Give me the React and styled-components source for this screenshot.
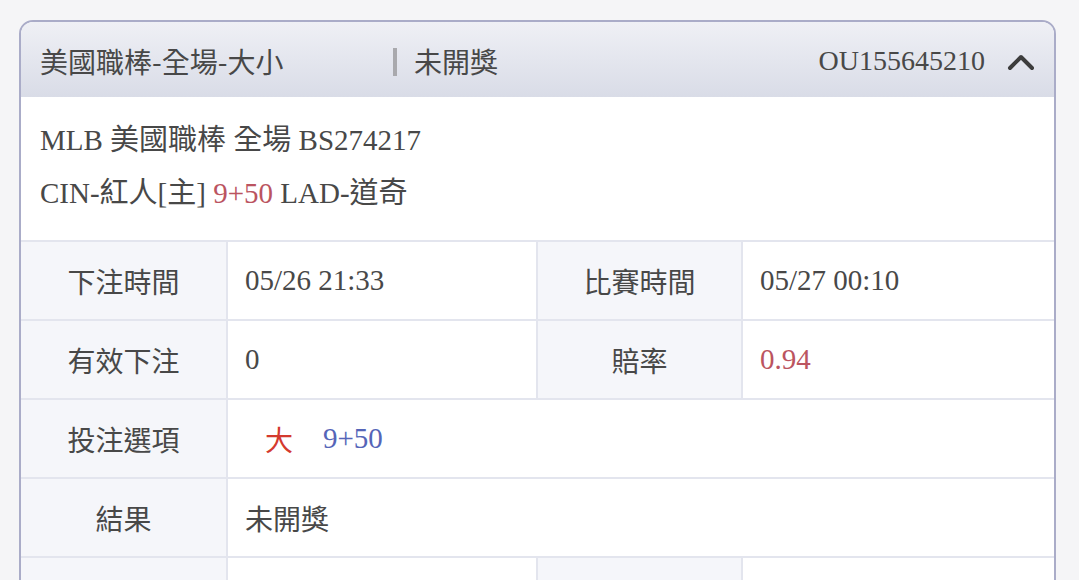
import React from 'react';
import styled, { createGlobalStyle } from 'styled-components';

const GlobalStyle = createGlobalStyle`
  html, body {
    margin: 0;
    padding: 0;
    background: #f5f5f7;
  }
  body {
    font-family: "Liberation Serif", "Noto Sans CJK TC", serif;
    color: #484848;
    overflow: hidden;
  }
`;

const Page = styled.div`
  padding: 20px 23px 0 19px;
  height: 580px;
  box-sizing: border-box;
`;

const Card = styled.div`
  border: 2px solid #aaacc8;
  border-radius: 14px;
  overflow: hidden;
  background: #fff;
  height: 600px;
`;

const Header = styled.div`
  height: 75px;
  display: flex;
  align-items: center;
  padding: 2px 19px 0 19px;
  box-sizing: border-box;
  background: linear-gradient(to bottom, #eff0f5 0%, #d9dce7 100%);
  color: #484848;
`;

const Title = styled.span`
  width: 353px;
  font-family: "Noto Sans CJK TC", sans-serif;
  font-size: 28px;
`;

const Divider = styled.span`
  width: 4px;
  height: 28px;
  background: #a9a9ad;
  margin-right: 17px;
  margin-top: 2px;
`;

const Status = styled.span`
  flex: 1;
  font-family: "Noto Sans CJK TC", sans-serif;
  font-size: 28px;
`;

const OrderNo = styled.span`
  font-size: 28px;
  margin-right: 22px;
`;

const Chevron = styled.svg`
  width: 28px;
  height: 18px;
  margin-top: 2px;
`;

const Info = styled.div`
  padding: 17px 19px 20px;
  font-size: 29px;
  line-height: 53px;
`;

const InfoLine = styled.div``;

const Red = styled.span`
  color: ${({ $tone }) => ($tone === 'bright' ? '#d43a2e' : '#bb5460')};
`;

const Blue = styled.span`
  color: #5565b8;
`;

const Table = styled.div`
  display: grid;
  grid-template-columns: 205px 308px 203px 1fr;
  grid-auto-rows: 77px;
  gap: 2px;
  padding-top: 2px;
  background: #e3e5ee;
`;

const Label = styled.div`
  background: #f5f6fa;
  display: flex;
  align-items: center;
  justify-content: center;
  font-family: "Noto Sans CJK TC", sans-serif;
  font-size: 28px;
  color: #484848;
`;

const Value = styled.div`
  background: #fff;
  display: flex;
  align-items: center;
  padding-left: ${({ $indent }) => ($indent ? '37px' : '17px')};
  font-size: 29px;
  grid-column: ${({ $span }) => ($span ? `span ${$span}` : 'auto')};
`;

const Pick = styled.span`
  font-family: "Noto Sans CJK TC", sans-serif;
  font-size: 28px;
  margin-right: 30px;
`;

const App = () => (
  <>
    <GlobalStyle />
    <Page>
      <Card>
        <Header>
          <Title>美國職棒-全場-大小</Title>
          <Divider />
          <Status>未開獎</Status>
          <OrderNo>OU155645210</OrderNo>
          <Chevron viewBox="0 0 28 18">
            <path d="M3 15 L14 4 L25 15" fill="none" stroke="#3d3d3d" strokeWidth="4" strokeLinecap="round" strokeLinejoin="round" />
          </Chevron>
        </Header>
        <Info>
          <InfoLine>MLB 美國職棒 全場 BS274217</InfoLine>
          <InfoLine>
            CIN-紅人[主] <Red>9+50</Red> LAD-道奇
          </InfoLine>
        </Info>
        <Table>
          <Label>下注時間</Label>
          <Value>05/26 21:33</Value>
          <Label>比賽時間</Label>
          <Value>05/27 00:10</Value>

          <Label>有效下注</Label>
          <Value>0</Value>
          <Label>賠率</Label>
          <Value>
            <Red>0.94</Red>
          </Value>

          <Label>投注選項</Label>
          <Value $span={3} $indent>
            <Pick>
              <Red $tone="bright">大</Red>
            </Pick>
            <Blue>9+50</Blue>
          </Value>

          <Label>結果</Label>
          <Value $span={3}>
            <Pick>未開獎</Pick>
          </Value>

          <Label />
          <Value />
          <Label />
          <Value />
        </Table>
      </Card>
    </Page>
  </>
);

export default App;
